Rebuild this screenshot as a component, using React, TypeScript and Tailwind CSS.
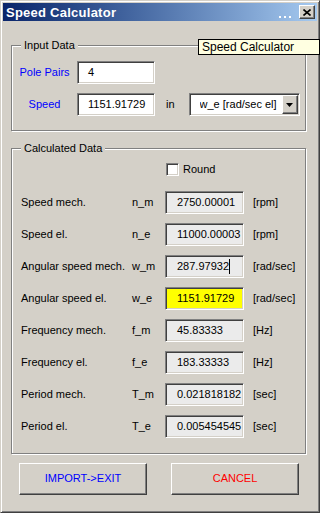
import React from 'react'

const sunken =
  "border border-t-[#808080] border-l-[#808080] border-b-white border-r-white shadow-[inset_1px_1px_0_#404040,inset_-1px_-1px_0_#d4d0c8]"
const raised =
  "border border-t-white border-l-white border-b-[#404040] border-r-[#404040] shadow-[inset_-1px_-1px_0_#808080]"
const etched =
  "border border-[#808080] shadow-[inset_1px_1px_0_#fff,1px_1px_0_#fff]"

const rows = [
  { label: "Speed mech.", sym: "n_m", value: "2750.00001", unit: "[rpm]" },
  { label: "Speed el.", sym: "n_e", value: "11000.00003", unit: "[rpm]" },
  { label: "Angular speed mech.", sym: "w_m", value: "287.97932", unit: "[rad/sec]", caret: true },
  { label: "Angular speed el.", sym: "w_e", value: "1151.91729", unit: "[rad/sec]", active: true },
  { label: "Frequency mech.", sym: "f_m", value: "45.83333", unit: "[Hz]" },
  { label: "Frequency el.", sym: "f_e", value: "183.33333", unit: "[Hz]" },
  { label: "Period mech.", sym: "T_m", value: "0.021818182", unit: "[sec]" },
  { label: "Period el.", sym: "T_e", value: "0.005454545", unit: "[sec]" },
]

function TitleBar() {
  return (
    <div className="flex items-center h-[18px] bg-linear-to-r from-[#0a246a] to-[#a6caf0]">
      <span className="pl-[3px] text-[13px] font-bold tracking-[0.25px] text-white leading-none">
        Speed Calculator
      </span>
      <div className="ml-auto flex items-center gap-[3px] mt-[10px]">
        <span className="w-[2px] h-[2px] bg-white" />
        <span className="w-[2px] h-[2px] bg-white" />
        <span className="w-[2px] h-[2px] bg-white" />
      </div>
      <button className={`ml-[8px] mr-[2px] w-[16px] h-[14px] bg-[#d4d0c8] flex items-center justify-center ${raised}`}>
        <svg width="8" height="7" viewBox="0 0 8 7">
          <path d="M0.5 0.5 L7.5 6.5 M7.5 0.5 L0.5 6.5" stroke="black" strokeWidth="1.6" />
        </svg>
      </button>
    </div>
  )
}

function Group({ title, children, className = "" }: { title: string; children: React.ReactNode; className?: string }) {
  return (
    <fieldset className={`w-[295px] ${etched} ${className}`}>
      <legend className="ml-[9px] px-[3px] bg-[#d4d0c8] leading-[13px]">{title}</legend>
      {children}
    </fieldset>
  )
}

export default function App() {
  return (
    <div className="relative w-[320px] h-[513px] bg-[#d4d0c8] font-['Liberation_Sans',Arial,sans-serif] text-[11px] text-black overflow-hidden">
      <div className="flex flex-col w-[320px] h-[513px] p-[2px] border border-t-[#d4d0c8] border-l-[#d4d0c8] border-b-[#404040] border-r-[#404040] shadow-[inset_1px_1px_0_#fff,inset_-1px_-1px_0_#808080]">
        <TitleBar />

        <div className="flex flex-col px-[8px]">
          <Group title="Input Data" className="mt-[18px]">
            <div className="flex flex-col gap-[9px] pt-[9px] pb-[14px]">
              <div className="flex items-center">
                <span className="w-[65px] text-center text-[#0000ff]">Pole Pairs</span>
                <div className={`w-[78px] h-[23px] bg-white flex items-center pl-[10px] ${sunken}`}>4</div>
              </div>
              <div className="flex items-center">
                <span className="w-[65px] text-center text-[#0000ff]">Speed</span>
                <div className={`w-[78px] h-[23px] bg-white flex items-center pl-[10px] ${sunken}`}>1151.91729</div>
                <span className="ml-[11px]">in</span>
                <div className={`ml-[14px] w-[111px] h-[23px] bg-white flex items-center pl-[10px] pr-[1px] ${sunken}`}>
                  <span className="flex-1 whitespace-nowrap overflow-hidden">w_e [rad/sec el]</span>
                  <span className={`w-[16px] h-[19px] bg-[#d4d0c8] flex items-center justify-center ${raised}`}>
                    <svg width="7" height="4" viewBox="0 0 7 4">
                      <path d="M0 0 H7 L3.5 4 Z" fill="black" />
                    </svg>
                  </span>
                </div>
              </div>
            </div>
          </Group>

          <Group title="Calculated Data" className="mt-[11px]">
            <div className="flex items-center pt-[6px] pl-[154px]">
              <span className={`w-[13px] h-[13px] bg-white ${sunken}`} />
              <span className="ml-[4px]">Round</span>
            </div>
            <div className="grid grid-cols-[111px_33px_79px_auto] gap-y-[9px] items-center pl-[9px] pt-[13px] pb-[15px]">
              {rows.map((r) => (
                <React.Fragment key={r.sym}>
                  <span className="whitespace-nowrap">{r.label}</span>
                  <span>{r.sym}</span>
                  <div
                    className={`h-[23px] flex items-center pl-[11px] whitespace-nowrap ${sunken} ${
                      r.active ? "bg-[#ffff00]" : "bg-[#ebebeb]"
                    }`}
                  >
                    {r.value}
                    {r.caret && <span className="w-px h-[15px] bg-black" />}
                  </div>
                  <span className="pl-[9px]">{r.unit}</span>
                </React.Fragment>
              ))}
            </div>
          </Group>

          <div className="flex gap-[24px] mt-[9px] ml-[8px]">
            <button className={`w-[128px] h-[32px] bg-[#d4d0c8] text-[#0000ff] ${raised}`}>IMPORT-&gt;EXIT</button>
            <button className={`w-[128px] h-[32px] bg-[#d4d0c8] text-[#ff0000] ${raised}`}>CANCEL</button>
          </div>
        </div>
      </div>

      <div className="absolute left-[198px] top-[39px] w-[122px] h-[16px] bg-[#ffffe1] border border-black flex items-center pl-[3px] text-[12px] whitespace-nowrap">
        Speed Calculator
      </div>
    </div>
  )
}
